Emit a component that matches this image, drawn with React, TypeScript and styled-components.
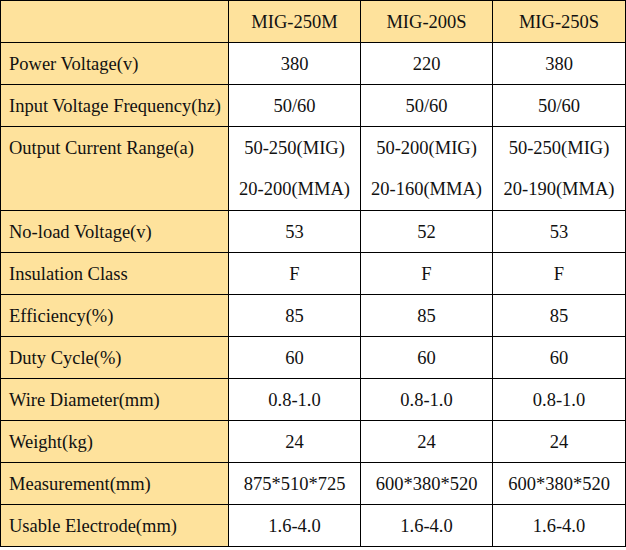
import React from "react";
import styled, { createGlobalStyle } from "styled-components";

const GlobalStyle = createGlobalStyle`
  html, body {
    margin: 0;
    padding: 0;
    background: #fff;
  }
`;

const models = ["MIG-250M", "MIG-200S", "MIG-250S"];
const colWidths = [228, 132, 132, 133];

type Spec = {
  label: string;
  values: Array<string | string[]>;
};

const specs: Spec[] = [
  { label: "Power Voltage(v)", values: ["380", "220", "380"] },
  { label: "Input Voltage Frequency(hz)", values: ["50/60", "50/60", "50/60"] },
  {
    label: "Output Current Range(a)",
    values: [
      ["50-250(MIG)", "20-200(MMA)"],
      ["50-200(MIG)", "20-160(MMA)"],
      ["50-250(MIG)", "20-190(MMA)"],
    ],
  },
  { label: "No-load Voltage(v)", values: ["53", "52", "53"] },
  { label: "Insulation Class", values: ["F", "F", "F"] },
  { label: "Efficiency(%)", values: ["85", "85", "85"] },
  { label: "Duty Cycle(%)", values: ["60", "60", "60"] },
  { label: "Wire Diameter(mm)", values: ["0.8-1.0", "0.8-1.0", "0.8-1.0"] },
  { label: "Weight(kg)", values: ["24", "24", "24"] },
  { label: "Measurement(mm)", values: ["875*510*725", "600*380*520", "600*380*520"] },
  { label: "Usable Electrode(mm)", values: ["1.6-4.0", "1.6-4.0", "1.6-4.0"] },
];

const SpecTable = styled.table`
  width: 625px;
  border-collapse: collapse;
  table-layout: fixed;
  font-family: "Liberation Serif", "Times New Roman", serif;
  font-size: 18.5px;
  color: #111;
`;

const Col = styled.col<{ $w: number }>`
  width: ${(p) => p.$w}px;
`;

const HeadCell = styled.th`
  border: 1px solid #000;
  padding: 1px 0 0;
  line-height: 40px;
  font-weight: 400;
  text-align: center;
  white-space: nowrap;
  background: #fee29c;
`;

const LabelCell = styled.td`
  border: 1px solid #000;
  padding: 2px 0 0 8px;
  line-height: 39px;
  vertical-align: top;
  white-space: nowrap;
  text-align: left;
  background: #fee29c;
`;

const ValueCell = styled.td`
  border: 1px solid #000;
  padding: 2px 0 0;
  line-height: 39px;
  vertical-align: top;
  white-space: nowrap;
  text-align: center;
  background: #fff;
`;

const Line = styled.div`
  height: 40.5px;
`;

export default function App() {
  return (
    <>
      <GlobalStyle />
      <SpecTable>
        <colgroup>
          {colWidths.map((w, i) => (
            <Col key={i} $w={w} />
          ))}
        </colgroup>
        <thead>
          <tr>
            <HeadCell />
            {models.map((m) => (
              <HeadCell key={m}>{m}</HeadCell>
            ))}
          </tr>
        </thead>
        <tbody>
          {specs.map((row) => (
            <tr key={row.label}>
              <LabelCell>{row.label}</LabelCell>
              {row.values.map((v, i) => (
                <ValueCell key={i}>
                  {Array.isArray(v) ? v.map((line) => <Line key={line}>{line}</Line>) : v}
                </ValueCell>
              ))}
            </tr>
          ))}
        </tbody>
      </SpecTable>
    </>
  );
}
